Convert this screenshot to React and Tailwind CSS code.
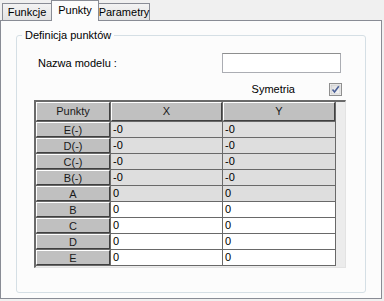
import React from "react";

const rows = [
    { label: "E(-)", x: "-0", y: "-0", shaded: true },
    { label: "D(-)", x: "-0", y: "-0", shaded: true },
    { label: "C(-)", x: "-0", y: "-0", shaded: true },
    { label: "B(-)", x: "-0", y: "-0", shaded: true },
    { label: "A", x: "0", y: "0", shaded: true },
    { label: "B", x: "0", y: "0", shaded: false },
    { label: "C", x: "0", y: "0", shaded: false },
    { label: "D", x: "0", y: "0", shaded: false },
    { label: "E", x: "0", y: "0", shaded: false },
];

const HeadCell = ({ children, className = "" }) => (
    <div className={`flex items-center justify-center bg-[#c0c0c0] border-t border-l border-white border-r border-b border-r-[#404040] border-b-[#404040] text-[#1a1a1a] ${className}`}>
        {children}
    </div>
);

const App = () => {
    return (
        <div
            className="w-[384px] h-[301px] bg-[#f0f0f0] text-[11px] leading-[13px] text-black overflow-hidden"
            style={{ fontFamily: '"Liberation Sans", Arial, sans-serif' }}
        >
            {/* Tabs */}
            <div className="flex items-end h-[20px] pl-[2px] relative z-10">
                <div className="w-[50px] h-[17px] border border-b-0 border-[#898c95] bg-gradient-to-b from-[#f3f3f3] to-[#e3e3e3] flex items-center justify-center pt-[1px]">
                    Funkcje
                </div>
                <div className="w-[48px] h-[21px] -mb-px -ml-px border border-b-0 border-[#898c95] bg-[#fcfcfc] flex justify-center pt-[3px]">
                    Punkty
                </div>
                <div className="w-[52px] h-[17px] -ml-px border border-b-0 border-[#898c95] bg-gradient-to-b from-[#f3f3f3] to-[#e3e3e3] flex items-center justify-center pt-[1px]">
                    Parametry
                </div>
            </div>

            {/* Panel */}
            <div className="w-[382px] h-[279px] border border-[#898c95] bg-[#fcfcfc] pt-[8px] pl-[15px]">
                <fieldset className="w-[350px] h-[264px] border border-[#d5dfe5] rounded-[3px]">
                    <legend className="ml-[5px] px-[3px] leading-[13px]">Definicja punktów</legend>

                    <div className="flex items-center h-[20px] mt-[11px]">
                        <span className="ml-[21px]">Nazwa modelu :</span>
                        <div className="ml-auto mr-[24px] w-[119px] h-[20px] border border-[#abadb3] border-t-[#8e8f8f] bg-white"></div>
                    </div>

                    <div className="flex items-center justify-end h-[13px] mt-[10px] mr-[23px]">
                        <span>Symetria</span>
                        <svg width="13" height="13" viewBox="0 0 13 13" className="ml-[34px]">
                            <defs>
                                <linearGradient id="cb" x1="0" y1="0" x2="1" y2="1">
                                    <stop offset="0" stopColor="#dcdcdc" />
                                    <stop offset="1" stopColor="#f6f6f6" />
                                </linearGradient>
                            </defs>
                            <rect x="0.5" y="0.5" width="12" height="12" fill="#f4f4f4" stroke="#8f8f8f" />
                            <rect x="2" y="2" width="9" height="9" fill="url(#cb)" stroke="#b6b6b6" strokeWidth="0.5" />
                            <path d="M3.5 6.5 L5.5 9 L9.8 3.2" fill="none" stroke="#4a5f97" strokeWidth="1.6" />
                        </svg>
                    </div>

                    {/* Grid */}
                    <div className="mt-[4px] ml-[17px] w-[312px] h-[168px] border-l-2 border-t-2 border-[#6a6a6a] border-r border-b border-r-[#e3e3e3] border-b-[#e3e3e3] bg-[#ececec]">
                        <div className="inline-grid grid-cols-[74px_111px_112px] grid-rows-[19px_repeat(9,15px)] gap-px bg-[#696969] pr-px pb-px">
                            <HeadCell>Punkty</HeadCell>
                            <HeadCell>X</HeadCell>
                            <HeadCell>Y</HeadCell>
                            {rows.map((r) => (
                                <React.Fragment key={r.label + r.shaded}>
                                    <HeadCell className="pt-[1px]">{r.label}</HeadCell>
                                    <div className={`pl-[2px] flex items-center ${r.shaded ? "bg-[#dedede]" : "bg-white"}`}>{r.x}</div>
                                    <div className={`pl-[2px] flex items-center ${r.shaded ? "bg-[#dedede]" : "bg-white"}`}>{r.y}</div>
                                </React.Fragment>
                            ))}
                        </div>
                    </div>
                </fieldset>
            </div>
        </div>
    );
};

export default App;
